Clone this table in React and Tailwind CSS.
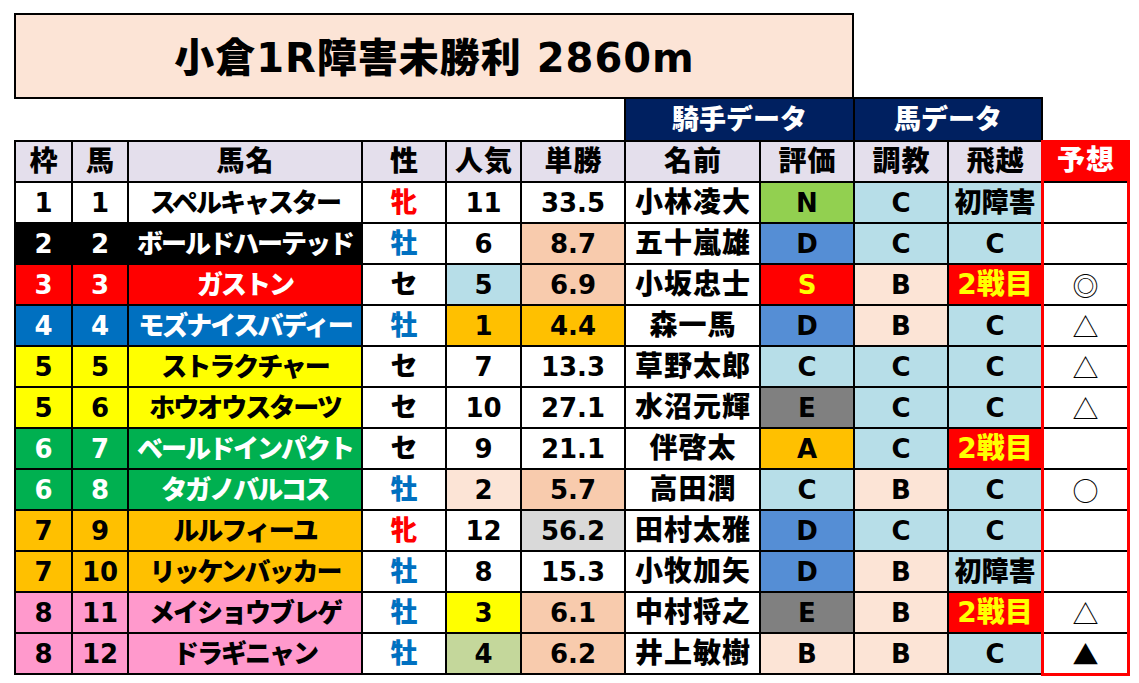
import React from "react";

const FRAME = {
  1: "bg-white text-black",
  2: "bg-black text-white",
  3: "bg-[#ff0000] text-white",
  4: "bg-[#0070c0] text-white",
  5: "bg-[#ffff00] text-black",
  6: "bg-[#00b050] text-white",
  7: "bg-[#ffc000] text-black",
  8: "bg-[#ff99cc] text-black",
};

const SEX = {
  "牝": "text-[#ff0000]",
  "牡": "text-[#0070c0]",
  "セ": "text-black",
};

const POP = {
  "1": "bg-[#ffc000]",
  "2": "bg-[#fce4d6]",
  "3": "bg-[#ffff00]",
  "4": "bg-[#c4d79b]",
  "5": "bg-[#b7dee8]",
};

const ODDS = {
  white: "bg-white",
  peach: "bg-[#f8cbad]",
  orange: "bg-[#ffc000]",
  gray: "bg-[#d9d9d9]",
};

const EVAL = {
  N: "bg-[#92d050] text-black",
  D: "bg-[#558ed5] text-black",
  S: "bg-[#ff0000] text-[#ffff00]",
  E: "bg-[#808080] text-black",
  C: "bg-[#b7dee8] text-black",
  A: "bg-[#ffc000] text-black",
  B: "bg-[#fce4d6] text-black",
};

const JUMP = {
  "初障害": "bg-[#b7dee8] text-black text-[27px]",
  "C": "bg-[#b7dee8] text-black text-[26px]",
  "2戦目": "bg-[#ff0000] text-[#ffff00] text-[28px]",
};

const rows = [
  [1, 1, "スペルキャスター", "牝", "11", "33.5", "white", "小林凌大", "N", "C", "初障害", ""],
  [2, 2, "ボールドハーテッド", "牡", "6", "8.7", "peach", "五十嵐雄", "D", "C", "C", ""],
  [3, 3, "ガストン", "セ", "5", "6.9", "peach", "小坂忠士", "S", "B", "2戦目", "◎"],
  [4, 4, "モズナイスバディー", "牡", "1", "4.4", "orange", "森一馬", "D", "B", "C", "△"],
  [5, 5, "ストラクチャー", "セ", "7", "13.3", "white", "草野太郎", "C", "C", "C", "△"],
  [5, 6, "ホウオウスターツ", "セ", "10", "27.1", "white", "水沼元輝", "E", "C", "C", "△"],
  [6, 7, "ベールドインパクト", "セ", "9", "21.1", "white", "伴啓太", "A", "C", "2戦目", ""],
  [6, 8, "タガノバルコス", "牡", "2", "5.7", "peach", "高田潤", "C", "B", "C", "○"],
  [7, 9, "ルルフィーユ", "牝", "12", "56.2", "gray", "田村太雅", "D", "C", "C", ""],
  [7, 10, "リッケンバッカー", "牡", "8", "15.3", "white", "小牧加矢", "D", "B", "初障害", ""],
  [8, 11, "メイショウブレゲ", "牡", "3", "6.1", "peach", "中村将之", "E", "B", "2戦目", "△"],
  [8, 12, "ドラギニャン", "牡", "4", "6.2", "peach", "井上敏樹", "B", "B", "C", "▲"],
];

const font = "font-['DejaVu_Sans','Noto_Sans_CJK_JP',sans-serif]";
const cell = "flex items-center justify-center font-black leading-none whitespace-nowrap";

function Header({ children }) {
  return (
    <div className={`${cell} bg-[#e4dfec] text-black text-[28px] tracking-[1px] pl-[1px]`}>
      {children}
    </div>
  );
}

export default function App() {
  return (
    <div className={`w-[1139px] h-[683px] bg-white pt-[13px] pl-[14px] ${font}`}>
      <div className="w-[840px] h-[86px] border-2 border-black bg-[#fce4d6] flex items-center justify-center pt-[3px]">
        <span className="text-[40px] font-black tracking-[1px] pl-[1px] text-black leading-none">
          小倉1R障害未勝利 2860m
        </span>
      </div>

      <div className="-mt-[2px] ml-[610px] flex w-fit bg-black gap-[2px] px-[2px] pt-[2px]">
        <div className={`${cell} w-[227px] h-[41px] bg-[#002060] text-white text-[27px]`}>
          騎手データ
        </div>
        <div className={`${cell} w-[186px] h-[41px] bg-[#002060] text-white text-[27px]`}>
          馬データ
        </div>
      </div>

      <div className="flex items-start">
        <div className="grid grid-cols-[55px_54px_232px_82px_73px_102px_133px_92px_92px_92px] auto-rows-[39px] gap-[2px] bg-black pl-[2px] pt-[2px] pb-[2px]">
          <Header>枠</Header>
          <Header>馬</Header>
          <Header>馬名</Header>
          <Header>性</Header>
          <Header>人気</Header>
          <Header>単勝</Header>
          <Header>名前</Header>
          <Header>評価</Header>
          <Header>調教</Header>
          <Header>飛越</Header>
          {rows.map((r) => {
            const [waku, uma, name, sex, pop, odds, oddsBg, jockey, ev, tr, jump] = r;
            const frame = FRAME[waku];
            return (
              <React.Fragment key={uma}>
                <div className={`${cell} ${frame} text-[26px]`}>{waku}</div>
                <div className={`${cell} ${frame} text-[26px]`}>{uma}</div>
                <div className={`${cell} ${frame} text-[26px] tracking-[-2px]`}>{name}</div>
                <div className={`${cell} bg-white ${SEX[sex]} text-[27px]`}>{sex}</div>
                <div className={`${cell} ${POP[pop] || "bg-white"} text-black text-[26px]`}>{pop}</div>
                <div className={`${cell} ${ODDS[oddsBg]} text-black text-[26px]`}>{odds}</div>
                <div className={`${cell} bg-white text-black text-[28px] tracking-[1px] pl-[1px]`}>{jockey}</div>
                <div className={`${cell} ${EVAL[ev]} text-[26px]`}>{ev}</div>
                <div className={`${cell} ${EVAL[tr]} text-[26px]`}>{tr}</div>
                <div className={`${cell} ${JUMP[jump]}`}>{jump}</div>
              </React.Fragment>
            );
          })}
        </div>

        <div className="flex flex-col w-[89px] gap-[2px] bg-black border-x-[3px] border-b-[3px] border-[#ff0000]">
          <div className={`${cell} h-[41px] bg-[#ff0000] text-white text-[28px] tracking-[1px] pl-[1px]`}>
            予想
          </div>
          {rows.map((r) => (
            <div
              key={r[1]}
              className="flex items-center justify-center h-[39px] bg-white text-black text-[26px] leading-none font-normal font-['Noto_Sans_CJK_JP',sans-serif]"
            >
              {r[11]}
            </div>
          ))}
        </div>
      </div>
    </div>
  );
}
